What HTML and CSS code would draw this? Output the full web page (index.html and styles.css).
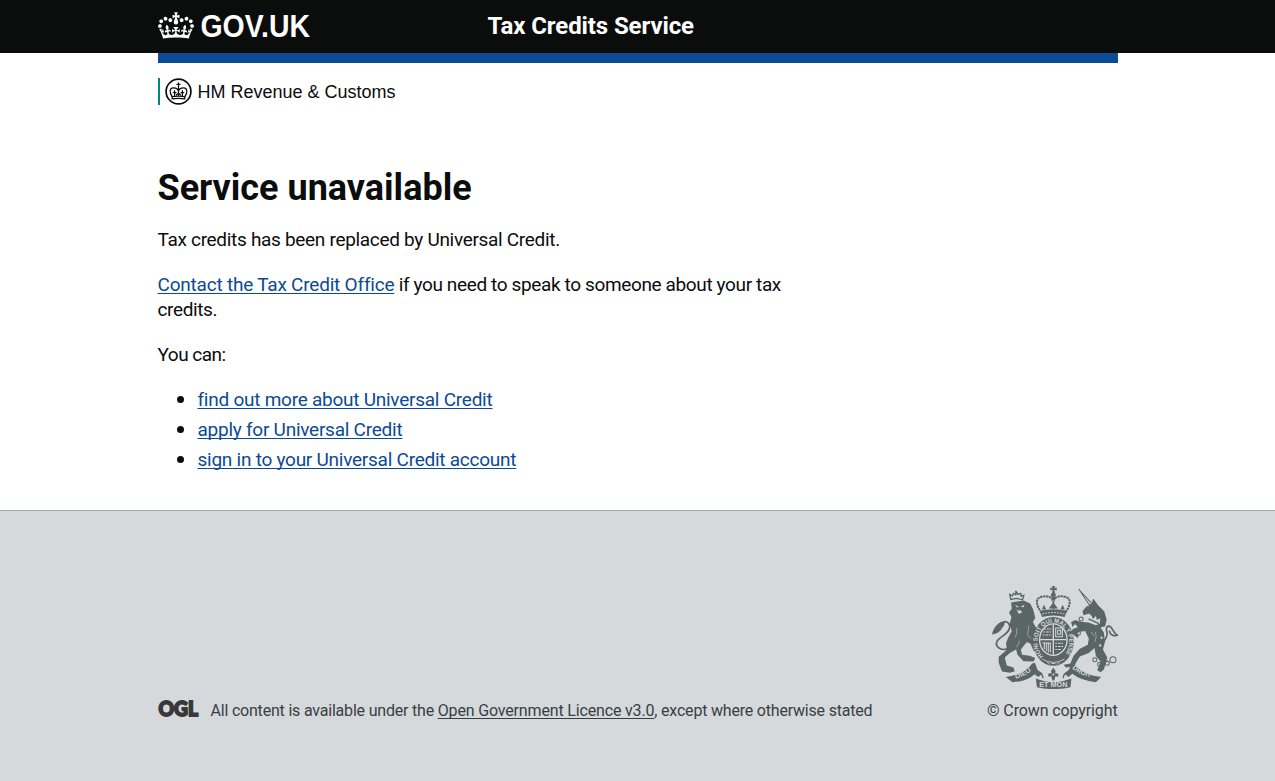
FILE: index.html
```html
<!DOCTYPE html>
<html lang="en">
<head>
<meta charset="utf-8">
<title>Service unavailable</title>
<link rel="stylesheet" href="styles.css">
</head>
<body>
<svg width="0" height="0" class="defs" aria-hidden="true">
  <symbol id="crown" viewBox="0 0 132 97"><path d="M25 30.2c3.5 1.5 7.7-.2 9.1-3.7 1.5-3.6-.2-7.8-3.9-9.2-3.6-1.4-7.6.3-9.1 3.9-1.4 3.5.3 7.5 3.9 9zM9 39.5c3.6 1.5 7.8-.2 9.2-3.7 1.5-3.6-.2-7.8-3.9-9.1-3.6-1.5-7.6.2-9.1 3.8-1.4 3.5.3 7.5 3.8 9zM4.4 57.2c3.5 1.5 7.7-.2 9.1-3.8 1.5-3.6-.2-7.7-3.9-9.1-3.5-1.5-7.6.3-9.1 3.8-1.4 3.5.3 7.6 3.9 9.1zm38.3-21.4c3.5 1.5 7.7-.2 9.1-3.8 1.5-3.6-.2-7.7-3.9-9.1-3.6-1.5-7.6.3-9.1 3.8-1.3 3.6.4 7.7 3.9 9.1zm64.4-5.6c-3.6 1.5-7.8-.2-9.1-3.7-1.5-3.6.2-7.8 3.8-9.2 3.6-1.4 7.7.3 9.2 3.9 1.3 3.5-.4 7.5-3.9 9zm15.9 9.3c-3.6 1.5-7.7-.2-9.1-3.7-1.5-3.6.2-7.8 3.7-9.1 3.6-1.5 7.7.2 9.2 3.8 1.5 3.5-.3 7.5-3.8 9zm4.7 17.7c-3.6 1.5-7.8-.2-9.2-3.8-1.5-3.6.2-7.7 3.9-9.1 3.6-1.5 7.7.3 9.2 3.8 1.3 3.5-.4 7.6-3.9 9.1zM89.3 35.8c-3.6 1.5-7.8-.2-9.2-3.8-1.4-3.6.2-7.7 3.9-9.1 3.6-1.5 7.7.3 9.2 3.8 1.4 3.6-.3 7.7-3.9 9.1zM69.7 17.7l8.9 4.7V9.3l-8.9 2.8c-.2-.3-.5-.6-.9-.9L72.4 0H59.6l3.5 11.2c-.3.3-.6.5-.9.9l-8.8-2.8v13.1l8.8-4.7c.3.3.6.7.9.9l-5 15.4v.1c-.2.8-.4 1.6-.4 2.4 0 4.1 3.1 7.5 7 8.1h.2c.3 0 .7.1 1 .1.4 0 .7 0 1-.1h.2c4-.6 7.1-4.1 7.1-8.1 0-.8-.1-1.7-.4-2.4V34l-5.1-15.4c.4-.2.7-.6 1-.9zM66 92.8c16.9 0 32.8 1.1 47.1 3.2 4-16.9 8.9-26.7 14-33.5l-9.6-3.4c1 4.9 1.1 7.2 0 10.2-1.5-1.4-3-4.3-4.2-8.7L108.6 76c2.8-2 5-3.2 7.5-3.3-4.4 9.4-10 11.9-13.6 11.2-4.3-.8-6.3-4.6-5.6-7.9 1-4.7 5.7-5.9 8-.5 4.3-8.7-3-11.4-7.6-8.8 7.1-7.2 7.9-13.5 2.1-21.1-8 6.1-8.1 12.3-4.5 20.8-4.7-5.4-12.1-2.5-9.5 6.2 3.4-5.2 7.9-2 7.2 3.1-.6 4.3-6.4 7.8-13.5 7.2-10.3-.9-10.9-8-11.2-13.8 2.5-.5 7.1 1.8 11 7.3L80.2 60c-4.1 4.4-8 5.3-12.3 5.4 1.4-4.4 8-11.6 8-11.6H55.5s6.4 7.2 7.9 11.6c-4.2-.1-8-1-12.3-5.4l1.4 16.4c3.9-5.5 8.5-7.7 10.9-7.3-.3 5.8-.9 12.8-11.1 13.8-7.2.6-12.9-2.9-13.5-7.2-.7-5 3.8-8.3 7.1-3.1 2.7-8.7-4.6-11.6-9.4-6.2 3.7-8.5 3.6-14.7-4.6-20.8-5.8 7.6-5 13.9 2.2 21.1-4.7-2.6-11.9.1-7.7 8.8 2.3-5.5 7.1-4.2 8.1.5.7 3.3-1.3 7.1-5.7 7.9-3.5.7-9-1.8-13.5-11.2 2.5.1 4.7 1.3 7.5 3.3l-4.7-15.4c-1.2 4.4-2.7 7.2-4.3 8.7-1.1-3-.9-5.3 0-10.2l-9.5 3.4c5 6.9 9.9 16.7 14 33.5 14.8-2.1 30.8-3.2 47.7-3.2z"/></symbol>
</svg>
<header class="header">
  <div class="container header-row">
    <div class="brand"><svg class="brand-crown"><use href="#crown"/></svg><svg class="brand-name" viewBox="0 0 110 30"><text x="-0.5" y="25" textLength="109.5" lengthAdjust="spacingAndGlyphs">GOV.UK</text></svg></div>
    <div class="service">Tax Credits Service</div>
  </div>
</header>
<main class="container">
  <div class="bar"></div>
  <div class="org">
    <svg class="org-crest" viewBox="0 0 27 27"><circle cx="13.5" cy="13.5" r="12.4" fill="none" stroke="#0b0c0c" stroke-width="1.7"/>
      <g fill="none" stroke="#0b0c0c" stroke-width="1.2" stroke-linecap="round"><path d="M13.5 4.8v4.6M11.9 6.3h3.2M13.5 10v7.5M7.2 18.6C3.8 14 4.9 9.9 8.3 9.9c2.9 0 5.2 1.2 5.2 4.2 0-3 2.3-4.2 5.2-4.2 3.4 0 4.5 4.1 1.1 8.7"/><path d="M7.2 18.6c4-.7 8.6-.7 12.6 0v2.2c-4-.6-8.6-.6-12.6 0zM9.6 12.7v4.6M8.2 14.6h2.8M17.4 12.7v4.6M16 14.6h2.8M11.4 16.8l2.1-1.6 2.1 1.6"/></g></svg>
    <span class="org-name">HM Revenue &amp; Customs</span>
  </div>
  <div class="content">
    <h1>Service unavailable</h1>
    <p class="intro">Tax credits has been replaced by Universal Credit.</p>
    <p class="contact"><a href="#">Contact the Tax Credit Office</a> if you need to speak to someone about your tax credits.</p>
    <p class="lead-in">You can:</p>
    <ul>
      <li><a href="#">find out more about Universal Credit</a></li>
      <li><a href="#">apply for Universal Credit</a></li>
      <li><a href="#">sign in to your Universal Credit account</a></li>
    </ul>
  </div>
</main>
<footer class="footer">
  <div class="container footer-row">
    <div class="licence">
      <svg class="ogl" viewBox="0 0 41 18"><text x="0.4" y="16" textLength="39.6" lengthAdjust="spacingAndGlyphs">OGL</text></svg>
      <span class="lic-text">All content is available under the <a href="#">Open Government Licence v3.0</a>, except where otherwise stated</span>
    </div>
    <div class="copyright">
      <svg class="arms" viewBox="36 33 376 307">
        <defs>
          <path id="garter" d="M189 243A47 57 0 1 1 249 243"/>
          <path id="dieu" d="M107 309Q136 302 160 281"/><path id="droit" d="M275 279Q302 302 337 305"/>
        </defs>
        <g fill="#5a6565">
          <!-- lion -->
          <path d="M92 73L89 58l8 4 3-7 7 4 3-7 4 6 8-3 1 8 8-2-4 13-17-4zM107 47v8" fill="none" stroke="#5a6565" stroke-width="4"/>
          <path d="M93 82L130 76L150 85L159 103L165 128L158 140L166 155L178 165L186 178L178 186L168 180L160 198L172 212L180 224L172 232L160 226L151 205L140 200L122 222L126 238L148 241L165 248L160 258L130 257L112 238L108 222L90 232L74 246L80 270L100 276L104 287L90 292L66 288L56 262L56 244L80 224L78 203L84 187L95 167L88 148L94 126L87 112L95 100z"/>
          <path d="M105 90l10 3-3 5zM121 95l12-6-3 7zM109 102l6 5 6-2 5 6-10 5z" fill="#d5d9dc"/>
          <path d="M82 220C60 228 43 212 52 196C60 184 82 178 88 160C92 145 80 136 70 140" fill="none" stroke="#5a6565" stroke-width="5"/>
          <path d="M74 138C58 138 42 152 36 177C48 177 62 168 66 158C72 152 75 146 74 138z"/>
          <path d="M110 158q2 18-5 28M146 150l-4 28 10 12M118 196q-2 12-10 20" fill="none" stroke="#d5d9dc" stroke-width="1.5"/>
          <!-- unicorn -->
          <path d="M295 42l31 47M299 47l33 36" stroke="#5a6565" stroke-width="3"/>
          <path d="M338 70L333 85C321 88 315 98 306 108L309 120L326 115L334 124L320 142L297 139L285 134L272 140L276 155L284 146L292 156L277 161L272 173L292 188L296 178L290 171L314 167L325 190L322 208L298 220L279 242L270 264L250 268L256 276L280 273L298 243L325 233L342 218L346 242L360 258L350 284L360 290L370 282L380 246L367 222L373 200L370 172L360 157L374 153L378 132L371 109L354 92z"/>
          <path d="M360 232C346 216 379 199 380 174C374 158 380 148 390 155C398 162 398 174 411 180C398 184 388 178 386 166" fill="none" stroke="#5a6565" stroke-width="5"/>
          <path d="M320 129l13-8 4 10 9-9 3 12 10-5-1 16-12 5-26-10zM319 92l8-2-4 5z" fill="#d5d9dc"/>
          <path d="M324 131l31 14" stroke="#5a6565" stroke-width="4"/>
          <path d="M345 170q4 16-2 30M332 170l8 12" fill="none" stroke="#d5d9dc" stroke-width="1.5"/>
          <g fill="none" stroke="#5a6565" stroke-width="3"><circle cx="302" cy="131" r="6" fill="#d5d9dc"/><circle cx="295" cy="174" r="5" fill="#d5d9dc"/><circle cx="359" cy="210" r="5" fill="#d5d9dc"/><circle cx="363" cy="187" r="5" fill="#d5d9dc"/><circle cx="343" cy="253" r="6"/><circle cx="357" cy="266" r="6"/><circle cx="380" cy="263" r="6"/><circle cx="397" cy="253" r="9"/></g>
          <!-- crown -->
          <path d="M215 33h9l-2 6 7-2v9l-7-2 2 12h-9l2-12-7 2v-9l7 2zM212 55h14v9h-14z"/>
          <path d="M184 113c-15-20-22-43 0-48 16-4 30 0 33 11V62h4v14c3-11 17-15 33-11 22 5 15 28 0 48M219 78v23" fill="none" stroke="#5a6565" stroke-width="6" stroke-dasharray="7 2"/>
          <path d="M179 107q40-10 80 0l-6 18q-34-9-68 0z"/><path d="M185 103l6-14 7 14zM205 100l14-18 14 18zM240 103l7-14 6 14z"/>
          <path d="M186 116q33-8 66 0" fill="none" stroke="#d5d9dc" stroke-width="3" stroke-dasharray="5 4"/>
          <!-- garter and shield -->
          <ellipse cx="219" cy="198" rx="61" ry="73"/>
          <ellipse cx="219" cy="193" rx="43" ry="49" fill="#d5d9dc"/>
          <ellipse cx="219" cy="193" rx="39" ry="45"/>
          <path d="M219 148v90M180 193h78" stroke="#d5d9dc" stroke-width="4"/>
          <g fill="none" stroke="#d5d9dc" stroke-width="3"><path d="M189 170h24M187 179h27M192 161h21M225 204h26M225 213h23M225 222h17" stroke-dasharray="5 3 8 2"/><path d="M226 158h20v26h-20zM232 165h9v12h-9zM187 203h24M192 203v18M198 203v24M204 203v28M210 203v28"/></g>
          <text class="arms-text" font-size="19"><textPath href="#garter" textLength="250" lengthAdjust="spacingAndGlyphs">HONI SOIT QUI MAL Y PENSE</textPath></text>
          <path d="M186 251q33 20 66 0M201 260l7 7M213 264h12M237 260l-7 7" fill="none" stroke="#d5d9dc" stroke-width="2.5"/>
          <!-- motto ribbon -->
          <path d="M77 304Q132 298 156 264L164 262L172 284L187 294L174 304L163 296Q142 317 97 320zM362 304Q305 298 281 263L273 262L266 284L252 294L264 304L276 295Q302 316 346 320zM167 309Q219 331 273 309L270 335Q219 346 170 335z"/>
          <path d="M164 268c2 29 25 20 24 40M273 267c-1 29-27 20-24 41" fill="none" stroke="#5a6565" stroke-width="4"/>
          <path d="M219 276l7 11-2 7c14-6 14 14 1 8l-3 13h-6l-3-13c-13 6-13-14 1-8l-2-7z"/>
          <circle cx="219" cy="297" r="3" fill="#d5d9dc"/>
          <g class="arms-text" font-size="20"><text x="177" y="335" textLength="84" lengthAdjust="spacingAndGlyphs">ET MON</text><text><textPath href="#dieu" textLength="52" lengthAdjust="spacingAndGlyphs">DIEU</textPath></text><text><textPath href="#droit" textLength="62" lengthAdjust="spacingAndGlyphs">DROIT</textPath></text></g>
        </g>
      </svg>
      <span class="copy-text">© Crown copyright</span>
    </div>
  </div>
</footer>
</body>
</html>
```
FILE: styles.css
```css
* { box-sizing: border-box; }
body { margin: 0; background: #fff; color: #0b0c0c; font-family: Roboto, "Liberation Sans", sans-serif; font-size: 19px; line-height: 25px; min-height: 781px; display: flex; flex-direction: column; }
.defs { position: absolute; }
.container { width: 960px; margin: 0 auto; }
.header { background: #0b0c0c; color: #fff; height: 53px; flex: none; }
.header-row { display: grid; grid-template-columns: 330px 1fr; align-items: center; height: 53px; }
.brand { display: flex; align-items: center; gap: 7px; }
.brand-crown { width: 36px; height: 27px; fill: #fff; margin-top: -2px; }
.brand-name { width: 110px; height: 30px; font: 700 30.5px "Liberation Sans", Arial, sans-serif; fill: #fff; overflow: visible; }
.service { font-size: 24px; font-weight: 700; letter-spacing: -0.1px; white-space: nowrap; }
.bar { height: 10px; background: #0b4a94; }
.org { display: flex; align-items: center; height: 27px; margin-top: 15px; border-left: 2px solid #00857a; padding-left: 5px; }
.org-crest { width: 27px; height: 27px; margin-right: 6px; }
.org-name { font: 18px/27px "Liberation Sans", Arial, sans-serif; white-space: nowrap; padding-top: 1px; }
.content { width: 640px; padding-top: 63px; }
h1 { margin: 0 0 19px; font-size: 36px; line-height: 40px; font-weight: 700; white-space: nowrap; }
p { margin: 0 0 20px; }
a { color: #0b4a94; text-decoration: underline; text-decoration-thickness: 1.3px; text-underline-offset: 2px; text-decoration-skip-ink: none; }
.intro { letter-spacing: -0.31px; }
.contact { letter-spacing: -0.37px; }
.contact a { letter-spacing: -0.21px; }
.lead-in { letter-spacing: -0.5px; }
ul { margin: 0; padding-left: 40px; letter-spacing: -0.25px; }
li { height: 25px; margin-bottom: 5px; line-height: 22px; }
li::marker { font-size: 24px; }
.footer { margin-top: 33px; flex: 1; background: #d5d9dc; border-top: 1px solid #a1acb2; color: #383f43; font-size: 16px; line-height: 20px; }
.footer-row { display: flex; justify-content: space-between; align-items: flex-end; padding-top: 75px; }
.licence { display: flex; align-items: center; gap: 12px; white-space: nowrap; letter-spacing: -0.2px; }
.ogl { width: 41px; height: 18px; margin-top: -5px; overflow: visible; font: 900 21.5px Lato, sans-serif; letter-spacing: 0; fill: #383838; stroke: #383838; stroke-width: 1.8px; }
.licence a { color: inherit; letter-spacing: -0.16px; }
.copyright { display: flex; flex-direction: column; align-items: flex-end; white-space: nowrap; letter-spacing: -0.12px; }
.arms { width: 126px; height: 103px; margin-bottom: 12px; letter-spacing: 0; }
.arms-text { font-family: "Liberation Sans", Arial, sans-serif; font-weight: 700; fill: #d5d9dc; }
```
